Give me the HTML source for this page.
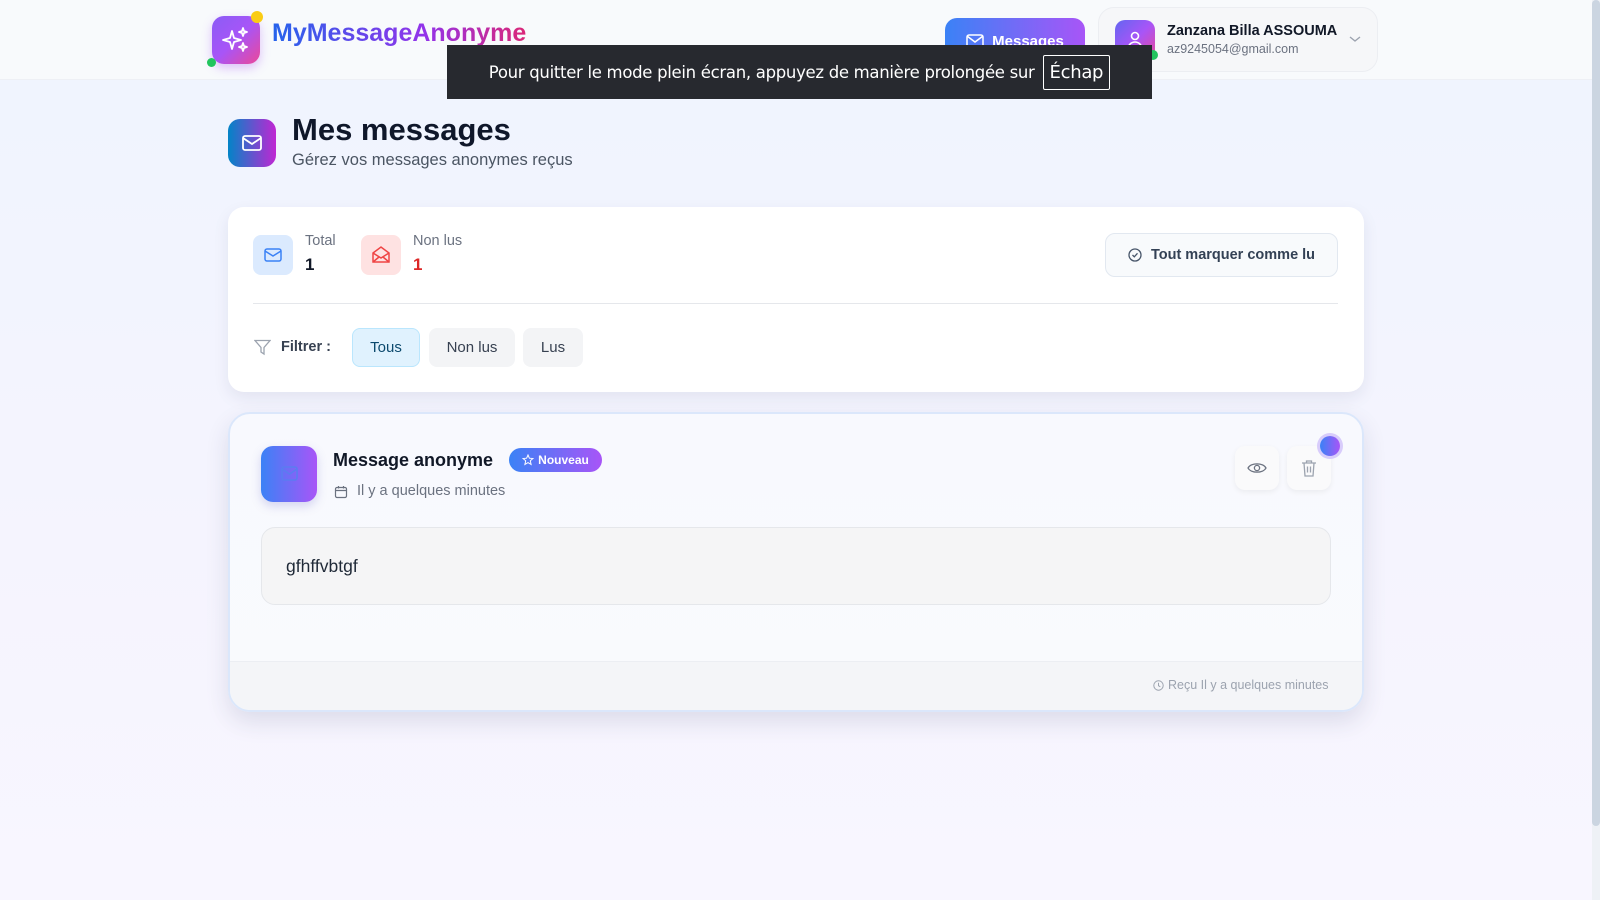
<!DOCTYPE html>
<html><head><meta charset="utf-8">
<style>
*{box-sizing:border-box;margin:0;padding:0}
body{width:1600px;height:900px;overflow:hidden;font-family:"Liberation Sans",sans-serif;background:linear-gradient(180deg,#eff4fe 0%,#f5f4fe 60%,#f8f6ff 100%);position:relative;color:#111827}
.abs{position:absolute}
.hdr{left:0;top:0;width:1592px;height:80px;background:#f8fafc;border-bottom:1px solid #eef0f5}
.sb{left:1592px;top:0;width:8px;height:900px;background:#eef1f6}
.thumb{left:1592px;top:0;width:8px;height:826px;background:#cbd5e1;border-radius:4px}
.card{background:#fff;border-radius:16px;box-shadow:0 6px 16px rgba(30,40,80,.08)}
.row{display:flex;align-items:center}
</style></head><body>
<div class="abs hdr"></div>
<div class="abs sb"></div><div class="abs thumb"></div>

<div class="abs" style="left:212px;top:16px;width:48px;height:48px;border-radius:12px;background:linear-gradient(135deg,#8b5cf6,#a855f7 50%,#ec4899);box-shadow:0 4px 10px rgba(168,85,247,.35)">
<svg width="48" height="48" viewBox="0 0 48 48" fill="none" stroke="#fff" stroke-width="1.8" stroke-linejoin="round"><path d="M20 15 L22 22 L29 24 L22 26 L20 33 L18 26 L11 24 L18 22Z"/><path d="M31 12 L32 15 L35 16 L32 17 L31 20 L30 17 L27 16 L30 15Z"/><path d="M31 27 L32 30 L35 31 L32 32 L31 35 L30 32 L27 31 L30 30Z"/></svg></div>
<div class="abs" style="left:251px;top:11px;width:12px;height:12px;border-radius:50%;background:#facc15"></div>
<div class="abs" style="left:207px;top:58px;width:9px;height:9px;border-radius:50%;background:#22c55e"></div>
<div class="abs" style="left:272px;top:19px;font-size:25px;font-weight:700;background:linear-gradient(90deg,#2563eb,#9333ea 60%,#db2777);-webkit-background-clip:text;color:transparent">MyMessageAnonyme</div>

<div class="abs row" style="left:945px;top:18px;width:140px;height:46px;border-radius:12px;background:linear-gradient(90deg,#3b82f6,#a855f7);color:#fff;font-weight:700;font-size:15px;justify-content:center;gap:8px">
<svg width="18" height="14" viewBox="0 0 18 14" fill="none" stroke="#fff" stroke-width="1.5"><rect x="1" y="1" width="16" height="12" rx="2"/><path d="M1 2 L9 8 L17 2"/></svg>Messages</div>
<div class="abs" style="left:1098px;top:7px;width:280px;height:65px;border-radius:16px;background:#f6f7f9;border:1px solid #eceef2"></div>
<div class="abs" style="left:1115px;top:20px;width:40px;height:40px;border-radius:10px;background:linear-gradient(135deg,#6366f1,#a855f7,#ec4899)">
<svg width="40" height="40" viewBox="0 0 40 40" fill="none" stroke="#fff" stroke-width="1.6"><circle cx="20" cy="16" r="3.5"/><path d="M13 29 a7 7 0 0 1 14 0"/></svg></div>
<div class="abs" style="left:1148px;top:50px;width:10px;height:10px;border-radius:50%;background:#22c55e"></div>
<div class="abs" style="left:1167px;top:23px;font-size:14.5px;font-weight:700;color:#111827">Zanzana Billa ASSOUMA</div>
<div class="abs" style="left:1167px;top:42px;font-size:12.5px;color:#6b7280">az9245054@gmail.com</div>
<svg class="abs" style="left:1348px;top:34px" width="14" height="10" viewBox="0 0 14 10" fill="none" stroke="#9ca3af" stroke-width="1.4"><path d="M2 3 L7 7 L12 3"/></svg>

<div class="abs row" style="left:447px;top:45px;width:705px;height:54px;background:#27292f;color:#fff;font-family:'DejaVu Sans',sans-serif;font-size:16.5px;justify-content:center;gap:8px;letter-spacing:-.3px">
<span>Pour quitter le mode plein écran, appuyez de manière prolongée sur</span><span style="border:1px solid #fff;padding:6px 6px;border-radius:2px;font-size:18px">Échap</span></div>

<div class="abs" style="left:228px;top:119px;width:48px;height:48px;border-radius:12px;background:linear-gradient(90deg,#0284c7,#c026d3)">
<svg width="48" height="48" viewBox="0 0 48 48" fill="none" stroke="#fff" stroke-width="1.8"><rect x="15" y="17" width="18" height="14" rx="2"/><path d="M15 19 L24 25 L33 19"/></svg></div>
<div class="abs" style="left:292px;top:112px;font-size:31px;font-weight:700;color:#0f172a">Mes messages</div>
<div class="abs" style="left:292px;top:151px;font-size:16.5px;color:#4b5563">Gérez vos messages anonymes reçus</div>

<div class="abs card" style="left:228px;top:207px;width:1136px;height:185px"></div>
<div class="abs" style="left:253px;top:235px;width:40px;height:40px;border-radius:8px;background:#dbeafe">
<svg width="40" height="40" viewBox="0 0 40 40" fill="none" stroke="#3b82f6" stroke-width="1.5"><rect x="12" y="14" width="16" height="12" rx="2"/><path d="M12 16 L20 21 L28 16"/></svg></div>
<div class="abs" style="left:305px;top:233px;font-size:14.5px;color:#6b7280">Total</div>
<div class="abs" style="left:305px;top:255px;font-size:17px;font-weight:700;color:#111827">1</div>
<div class="abs" style="left:361px;top:235px;width:40px;height:40px;border-radius:8px;background:#fee2e2">
<svg width="40" height="40" viewBox="0 0 40 40" fill="none" stroke="#ef4444" stroke-width="1.5"><path d="M12 18 L20 12 L28 18 V27 H12Z"/><path d="M12 18 L20 23 L28 18"/><path d="M12 27 L18 22 M28 27 L22 22"/></svg></div>
<div class="abs" style="left:413px;top:233px;font-size:14.5px;color:#6b7280">Non lus</div>
<div class="abs" style="left:413px;top:255px;font-size:17px;font-weight:700;color:#dc2626">1</div>
<div class="abs row" style="left:1105px;top:233px;width:233px;height:44px;border-radius:10px;background:#f8fafc;border:1px solid #e2e8f0;justify-content:center;gap:9px;font-size:14.5px;font-weight:700;color:#334155">
<svg width="14" height="14" viewBox="0 0 14 14" fill="none" stroke="#475569" stroke-width="1.3"><circle cx="7" cy="7" r="6"/><path d="M4.5 7 L6.3 8.8 L9.5 5.3"/></svg>Tout marquer comme lu</div>
<div class="abs" style="left:253px;top:303px;width:1085px;height:1px;background:#e5e7eb"></div>
<svg class="abs" style="left:254px;top:339px" width="17" height="17" viewBox="0 0 17 17" fill="none" stroke="#9ca3af" stroke-width="1.3"><path d="M1 1.5 H16 L10 8.5 V15 L7 13 V8.5Z"/></svg>
<div class="abs" style="left:281px;top:339px;font-size:14.5px;font-weight:700;color:#374151">Filtrer :</div>
<div class="abs row" style="left:352px;top:328px;width:68px;height:39px;border-radius:8px;background:#e0f2fe;border:1.5px solid #bae6fd;justify-content:center;font-size:15px;color:#0c4a6e">Tous</div>
<div class="abs row" style="left:429px;top:328px;width:86px;height:39px;border-radius:8px;background:#f3f4f6;justify-content:center;font-size:15px;color:#374151">Non lus</div>
<div class="abs row" style="left:523px;top:328px;width:60px;height:39px;border-radius:8px;background:#f3f4f6;justify-content:center;font-size:15px;color:#374151">Lus</div>

<div class="abs" style="left:228px;top:412px;width:1136px;height:300px;border-radius:22px;background:linear-gradient(180deg,#f8f9fe,#f9fafd);border:2px solid #dbe7fb;box-shadow:0 10px 24px rgba(30,40,80,.12);overflow:hidden">
<div class="abs" style="left:0;top:247px;width:100%;height:53px;background:#f4f5f8;border-top:1px solid #eceef3"></div>
</div>
<div class="abs" style="left:261px;top:446px;width:56px;height:56px;border-radius:12px;background:linear-gradient(90deg,#3b82f6,#a855f7);box-shadow:0 4px 10px rgba(100,100,200,.25)">
<svg width="56" height="56" viewBox="0 0 56 56" fill="none" stroke="#5b7cf0" stroke-width="1.6"><rect x="21" y="21" width="15" height="13" rx="2"/><path d="M21 23 L28.5 28 L36 23"/></svg></div>
<div class="abs" style="left:333px;top:450px;font-size:18px;font-weight:700;color:#111827">Message anonyme</div>
<div class="abs row" style="left:509px;top:448px;width:93px;height:24px;border-radius:12px;background:linear-gradient(90deg,#3b82f6,#a855f7);color:#fff;font-size:12px;font-weight:700;justify-content:center;gap:4px">
<svg width="12" height="12" viewBox="0 0 12 12" fill="none" stroke="#fff" stroke-width="1"><path d="M6 1 L7.4 4.2 L11 4.5 L8.3 6.8 L9.1 10.5 L6 8.6 L2.9 10.5 L3.7 6.8 L1 4.5 L4.6 4.2Z"/></svg>Nouveau</div>
<svg class="abs" style="left:334px;top:485px" width="14" height="14" viewBox="0 0 14 14" fill="none" stroke="#6b7280" stroke-width="1.2"><rect x="1.5" y="2.5" width="11" height="10" rx="1.5"/><path d="M1.5 5.5 H12.5 M4.5 1 V3.5 M9.5 1 V3.5"/></svg>
<div class="abs" style="left:357px;top:483px;font-size:14.5px;color:#6b7280">Il y a quelques minutes</div>
<div class="abs row" style="left:1235px;top:446px;width:44px;height:44px;border-radius:10px;background:#fafafb;box-shadow:0 2px 6px rgba(0,0,0,.06);justify-content:center">
<svg width="20" height="14" viewBox="0 0 20 14" fill="none" stroke="#6b7280" stroke-width="1.3"><path d="M1 7 C4 1.5 16 1.5 19 7 C16 12.5 4 12.5 1 7Z"/><circle cx="10" cy="7" r="2.6"/></svg></div>
<div class="abs row" style="left:1287px;top:446px;width:44px;height:44px;border-radius:10px;background:#fafafb;box-shadow:0 2px 6px rgba(0,0,0,.06);justify-content:center">
<svg width="16" height="18" viewBox="0 0 16 18" fill="none" stroke="#9ca3af" stroke-width="1.3"><path d="M1 4 H15 M5.5 4 V2 H10.5 V4 M3 4 L4 17 H12 L13 4 M6.5 7.5 V13.5 M9.5 7.5 V13.5"/></svg></div>
<div class="abs" style="left:1320px;top:436px;width:20px;height:20px;border-radius:50%;background:linear-gradient(90deg,#3b82f6,#a855f7);box-shadow:0 0 0 3px #d8ccfb"></div>
<div class="abs" style="left:261px;top:527px;width:1070px;height:78px;border-radius:14px;background:#f5f5f6;border:1px solid #e5e7eb"></div>
<div class="abs" style="left:286px;top:556px;font-size:17.5px;color:#1f2937">gfhffvbtgf</div>
<svg class="abs" style="left:1153px;top:680px" width="11" height="11" viewBox="0 0 11 11" fill="none" stroke="#9ca3af" stroke-width="1"><circle cx="5.5" cy="5.5" r="4.7"/><path d="M5.5 2.8 V5.7 L7.3 6.8"/></svg>
<div class="abs" style="left:1168px;top:678px;font-size:12.5px;color:#9ca3af">Reçu Il y a quelques minutes</div>
</body></html>
